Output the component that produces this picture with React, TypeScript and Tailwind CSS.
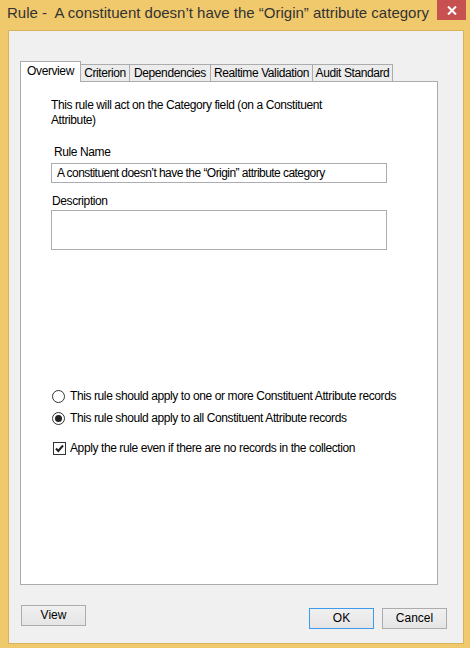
import React from 'react';

const tabs = ['Overview', 'Criterion', 'Dependencies', 'Realtime Validation', 'Audit Standard'];
const tabWidths = ['w-[61px]', 'w-[49px]', 'w-[81px]', 'w-[102px]', 'w-[80px]'];

const Radio: React.FC<{ checked?: boolean }> = ({ checked }) => (
  <span className="w-[13px] h-[13px] rounded-full border border-[#333333] bg-white flex items-center justify-center shrink-0">
    {checked && <span className="w-[7px] h-[7px] rounded-full bg-[#222222]" />}
  </span>
);

const CheckBox: React.FC = () => (
  <span className="w-[13px] h-[13px] border border-[#333333] bg-white flex items-center justify-center shrink-0">
    <svg width="11" height="11" viewBox="0 0 11 11">
      <path d="M2 5.5 L4.3 8 L9 2.5" fill="none" stroke="#222" strokeWidth="2" />
    </svg>
  </span>
);

const Button: React.FC<{ label: string; focused?: boolean; className?: string }> = ({ label, focused, className }) => (
  <button
    className={`w-[65px] h-[21px] text-[12px] leading-[15px] text-black bg-gradient-to-b from-[#f0f0f0] to-[#e5e5e5] border ${focused ? 'border-[#3c9bea]' : 'border-[#acacac]'} ${className ?? ''}`}
  >
    {label}
  </button>
);

const App: React.FC = () => {
  return (
    <div className="w-[470px] h-[648px] bg-[#f1c96d] flex flex-col overflow-hidden font-['Liberation_Sans',Arial,sans-serif] text-black">
      {/* Title bar */}
      <div className="h-[30px] flex items-start shrink-0">
        <div className="pl-[7px] pt-[3px] text-[15px] leading-[20px] text-[#333333] whitespace-nowrap flex-1 overflow-hidden">
          Rule -&nbsp; A constituent doesn’t have the “Origin” attribute category
        </div>
        <div className="w-[29px] h-[20px] bg-[#c75050] flex items-center justify-center mr-[4px] shrink-0">
          <svg width="10" height="9" viewBox="0 0 10 9">
            <path d="M1 0.5 L9 8.5 M9 0.5 L1 8.5" stroke="#fff" strokeWidth="2" />
          </svg>
        </div>
      </div>

      {/* Client area */}
      <div className="flex-1 ml-[8px] mr-[6px] mb-[4px] bg-[#f0f0f0] border border-[#d9b35c] pl-[11px] pt-[30px] flex flex-col">
        {/* Tabs */}
        <div className="flex items-end h-[20px] text-[12px] tracking-[-0.4px]">
          {tabs.map((t, i) =>
            i === 0 ? (
              <div
                key={t}
                className={`${tabWidths[i]} h-[21px] -mb-px relative z-10 bg-white border border-b-0 border-[#acacac] flex items-start justify-center pt-[2px] leading-[15px]`}
              >
                {t}
              </div>
            ) : (
              <div
                key={t}
                className={`${tabWidths[i]} h-[17px] bg-[#ececec] border border-l-0 border-b-0 border-[#acacac] flex items-center justify-center leading-[15px] whitespace-nowrap`}
              >
                {t}
              </div>
            )
          )}
        </div>

        {/* Panel */}
        <div className="w-[418px] h-[504px] bg-white border border-[#acacac] pl-[30px] pt-[16px] text-[12px] leading-[15px] tracking-[-0.4px]">
          <p>
            This rule will act on the Category field (on a Constituent
            <br />
            Attribute)
          </p>

          <div className="mt-[17px] ml-[3px]">Rule Name</div>
          <div className="mt-[3px] w-[336px] h-[20px] border border-[#abadb3] bg-white pl-[5px] flex items-center whitespace-nowrap tracking-[-0.55px]">
            A constituent doesn’t have the “Origin” attribute category
          </div>

          <div className="mt-[11px] ml-[1px]">Description</div>
          <div className="mt-[1px] w-[336px] h-[40px] border border-[#abadb3] bg-white" />

          <div className="mt-[139px] flex flex-col gap-[7px]">
            <label className="flex items-center gap-[5px] ml-[1px]">
              <Radio />
              <span>This rule should apply to one or more Constituent Attribute records</span>
            </label>
            <label className="flex items-center gap-[5px] ml-[1px]">
              <Radio checked />
              <span>This rule should apply to all Constituent Attribute records</span>
            </label>
          </div>
          <label className="mt-[15px] flex items-center gap-[4px] ml-[2px]">
            <CheckBox />
            <span>Apply the rule even if there are no records in the collection</span>
          </label>
        </div>

        {/* Buttons */}
        <div className="flex items-start mt-[20px]">
          <Button label="View" className="ml-[1px]" />
          <div className="flex-1" />
          <Button label="OK" focused className="mt-[3px]" />
          <Button label="Cancel" className="mt-[3px] ml-[8px] mr-[16px]" />
        </div>
      </div>
    </div>
  );
};

export default App;
